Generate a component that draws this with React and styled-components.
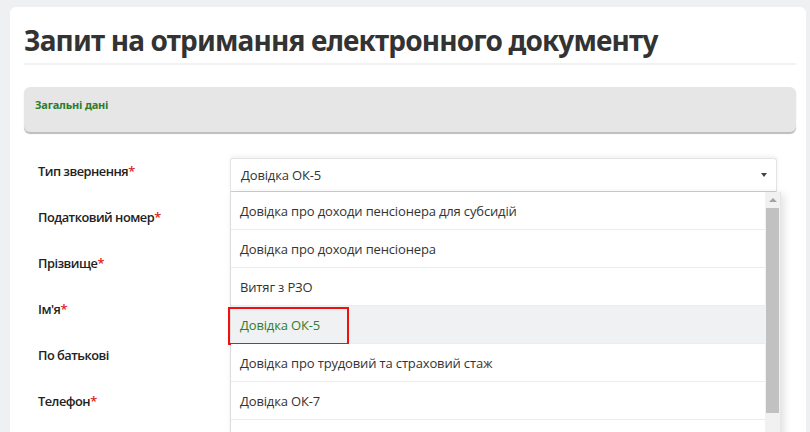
import styled, { createGlobalStyle } from "styled-components";

const GlobalStyle = createGlobalStyle`
  html, body {
    margin: 0;
    padding: 0;
    background: #eef0f2;
    font-family: "Open Sans", "Noto Sans", sans-serif;
    overflow: hidden;
  }
`;

const fields = [
  { label: "Тип звернення", required: true },
  { label: "Податковий номер", required: true },
  { label: "Прізвище", required: true },
  { label: "Ім'я", required: true },
  { label: "По батькові", required: false },
  { label: "Телефон", required: true },
];

const options = [
  "Довідка про доходи пенсіонера для субсидій",
  "Довідка про доходи пенсіонера",
  "Витяг з РЗО",
  "Довідка ОК-5",
  "Довідка про трудовий та страховий стаж",
  "Довідка ОК-7",
  "",
];

const App = () => {
  return (
    <Page>
      <GlobalStyle />
      <Card>
        <Title>Запит на отримання електронного документу</Title>
        <Panel>
          <PanelTitle>Загальні дані</PanelTitle>
        </Panel>
        <Form>
          <Labels>
            {fields.map((f) => (
              <Label key={f.label}>
                {f.label}
                {f.required && <Star>*</Star>}
              </Label>
            ))}
          </Labels>
          <SelectWrap>
            <Select>
              <span>Довідка ОК-5</span>
              <Caret />
            </Select>
            <Dropdown>
              <List>
                {options.map((o, i) => (
                  <Option key={i} $active={o === "Довідка ОК-5"}>
                    {o}
                    {o === "Довідка ОК-5" && <Marker />}
                  </Option>
                ))}
              </List>
              <Scrollbar>
                <ArrowUp />
                <Thumb />
              </Scrollbar>
            </Dropdown>
          </SelectWrap>
        </Form>
      </Card>
    </Page>
  );
};

export default App;

const Page = styled.div`
  padding: 7px 4px 0 10px;
  height: 432px;
  box-sizing: border-box;
`;

const Card = styled.div`
  background: #fff;
  border-radius: 6px 6px 0 0;
  height: 425px;
  padding: 0 10px 0 14px;
  box-sizing: border-box;
  overflow: hidden;
`;

const Title = styled.h1`
  margin: 0;
  padding: 15px 0 5px;
  font-family: "Noto Sans", "Open Sans", sans-serif;
  font-weight: 700;
  font-size: 28px;
  line-height: 36px;
  letter-spacing: -0.85px;
  color: #333;
  border-bottom: 2px solid #f2f2f2;
`;

const Panel = styled.div`
  margin-top: 22px;
  height: 45px;
  background: #e6e6e6;
  border-radius: 6px;
  box-shadow: 0 2px 1px #bdbdbd;
  padding: 10px 11px;
  box-sizing: border-box;
`;

const PanelTitle = styled.div`
  font-family: "Noto Sans", sans-serif;
  font-weight: 700;
  font-size: 11px;
  letter-spacing: -0.2px;
  color: #2b7d2b;
`;

const Form = styled.div`
  display: flex;
  margin-top: 26px;
`;

const Labels = styled.div`
  width: 206px;
  flex-shrink: 0;
  box-sizing: border-box;
  padding-left: 14px;
  display: flex;
  flex-direction: column;
`;

const Label = styled.div`
  height: 46px;
  font-size: 12.8px;
  font-weight: 600;
  letter-spacing: -0.5px;
  color: #222;
  line-height: 16px;
  padding-top: 5px;
  box-sizing: border-box;
`;

const Star = styled.span`
  color: #e02020;
`;

const SelectWrap = styled.div`
  position: relative;
  width: 550px;
`;

const Select = styled.div`
  height: 34px;
  width: 547px;
  box-sizing: border-box;
  border: 1px solid #e4e4e4;
  border-bottom-color: #cfcfcf;
  border-radius: 3px 3px 0 0;
  box-shadow: 0 -2px 4px rgba(0, 0, 0, 0.06);
  padding: 0 10px;
  display: flex;
  align-items: center;
  justify-content: space-between;
  font-size: 13px;
  letter-spacing: -0.15px;
  color: #333;
`;

const Caret = styled.span`
  width: 0;
  height: 0;
  border-left: 3px solid transparent;
  border-right: 3px solid transparent;
  border-top: 4px solid #444;
  margin-right: -1px;
`;

const Dropdown = styled.div`
  position: absolute;
  top: 34px;
  left: 0;
  width: 550px;
  display: flex;
  background: #fff;
  border-left: 1px solid #dcdcdc;
  box-shadow: 3px 2px 8px rgba(0, 0, 0, 0.12);
`;

const List = styled.div`
  flex: 1;
`;

const Option = styled.div`
  position: relative;
  height: 38px;
  box-sizing: border-box;
  border-bottom: 1px solid #ececec;
  padding: 0 9px;
  display: flex;
  align-items: center;
  font-size: 13px;
  letter-spacing: -0.15px;
  color: ${(p) => (p.$active ? "#2e7d32" : "#333")};
  background: ${(p) => (p.$active ? "#f0f1f2" : "#fff")};
`;

const Marker = styled.span`
  position: absolute;
  left: -3px;
  top: 1px;
  width: 121px;
  height: 38px;
  box-sizing: border-box;
  border: 2px solid #f01010;
`;

const Scrollbar = styled.div`
  width: 15px;
  background: #f1f1f1;
  display: flex;
  flex-direction: column;
  align-items: center;
  border-right: 1px solid #e6e6e6;
`;

const ArrowUp = styled.span`
  margin-top: 6px;
  width: 0;
  height: 0;
  border-left: 4px solid transparent;
  border-right: 4px solid transparent;
  border-bottom: 4px solid #a3a3a3;
`;

const Thumb = styled.div`
  margin-top: 6px;
  width: 13px;
  height: 205px;
  background: #c1c1c1;
`;
